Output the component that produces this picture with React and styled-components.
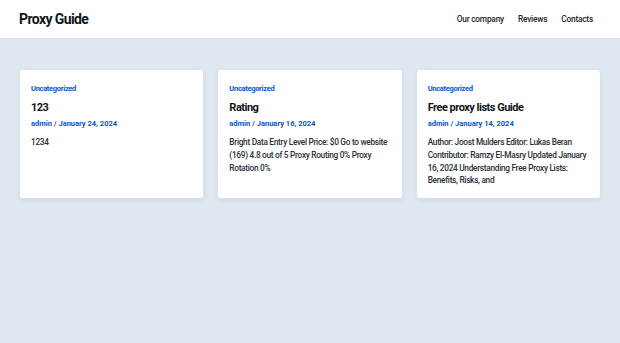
import styled, { createGlobalStyle } from "styled-components";

const Global = createGlobalStyle`
  html, body {
    margin: 0;
    padding: 0;
    background: #dfe7f0;
    font-family: Roboto, "Liberation Sans", sans-serif;
    color: #1b1f24;
  }
`;

const posts = [
  {
    title: "123",
    date: "January 24, 2024",
    excerpt: "1234",
  },
  {
    title: "Rating",
    date: "January 16, 2024",
    excerpt:
      "Bright Data Entry Level Price: $0 Go to website (169) 4.8 out of 5 Proxy Routing 0% Proxy Rotation 0%",
  },
  {
    title: "Free proxy lists Guide",
    date: "January 14, 2024",
    excerpt:
      "Author: Joost Mulders Editor: Lukas Beran Contributor: Ramzy El-Masry Updated January 16, 2024 Understanding Free Proxy Lists: Benefits, Risks, and",
  },
];

export default function App() {
  return (
    <Page>
      <Global />
      <Header>
        <Brand>Proxy Guide</Brand>
        <Nav>
          <NavLink>Our company</NavLink>
          <NavLink>Reviews</NavLink>
          <NavLink>Contacts</NavLink>
        </Nav>
      </Header>
      <Grid>
        {posts.map((p) => (
          <Card key={p.title}>
            <Category>Uncategorized</Category>
            <Title>{p.title}</Title>
            <Meta>admin / {p.date}</Meta>
            <Excerpt>{p.excerpt}</Excerpt>
          </Card>
        ))}
      </Grid>
    </Page>
  );
}

const Page = styled.div`
  min-height: 343px;
  background: #dfe7f0;
`;

const Header = styled.header`
  height: 38px;
  background: #ffffff;
  display: flex;
  align-items: center;
  justify-content: space-between;
  padding: 0 27px 0 19px;
  box-shadow: 0 1px 2px rgba(0, 0, 0, 0.06);
`;

const Brand = styled.div`
  font-size: 14px;
  font-weight: 700;
  letter-spacing: -0.6px;
  color: #111418;
`;

const Nav = styled.nav`
  display: flex;
  gap: 14px;
`;

const NavLink = styled.a`
  font-size: 8.3px;
  font-weight: 500;
  color: #1b1f24;
  letter-spacing: -0.2px;
`;

const Grid = styled.main`
  display: grid;
  grid-template-columns: repeat(3, 1fr);
  gap: 15px;
  padding: 32px 20px 0 20px;
`;

const Card = styled.article`
  background: #ffffff;
  border-radius: 3px;
  height: 128px;
  box-sizing: border-box;
  padding: 13px 11px;
  box-shadow: 0 2px 6px rgba(40, 60, 90, 0.08);
`;

const Category = styled.div`
  font-size: 7.5px;
  font-weight: 700;
  letter-spacing: -0.3px;
  color: #0b55d0;
  line-height: 11px;
`;

const Title = styled.h2`
  margin: 7px 0 0 0;
  font-size: 11px;
  line-height: 14px;
  font-weight: 700;
  letter-spacing: -0.5px;
  color: #111418;
`;

const Meta = styled.div`
  margin-top: 4px;
  font-size: 7.5px;
  font-weight: 700;
  letter-spacing: 0;
  color: #0b55d0;
  line-height: 10px;
`;

const Excerpt = styled.p`
  margin: 7px 0 0 0;
  font-size: 8.3px;
  line-height: 12.8px;
  letter-spacing: -0.3px;
  font-weight: 500;
  color: #2b2f35;
`;
